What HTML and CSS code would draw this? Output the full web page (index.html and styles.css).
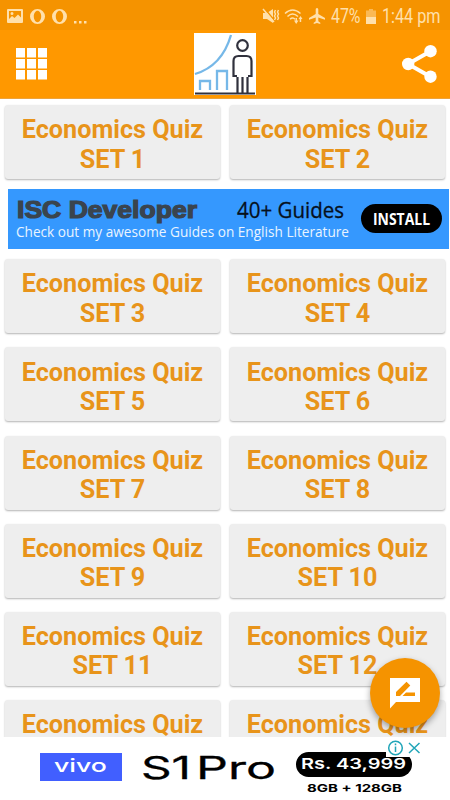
FILE: index.html
```html
<!DOCTYPE html>
<html lang="en">
<head>
    <meta charset="UTF-8">
    <meta name="viewport" content="width=device-width, initial-scale=1.0">
    <title>Economics Quiz</title>
    <link rel="stylesheet" href="styles.css">
</head>
<body>
    <div class="status-bar">
        <div class="status-left">
            <svg class="icon-picture" width="16" height="14" viewBox="0 0 16 14">
                <path fill-rule="evenodd" d="M1 0h14a1 1 0 0 1 1 1v12a1 1 0 0 1-1 1H1a1 1 0 0 1-1-1V1a1 1 0 0 1 1-1zM2 2v8l3-3 2.500 2L11 5.500l3 3V2zM5 3a1.500 1.500 0 1 1 0 3 1.500 1.500 0 0 1 0-3z"/>
            </svg>
            <svg class="icon-opera" width="15" height="15" viewBox="0 0 15 15">
                <path fill-rule="evenodd" d="M7.500 0a7.500 7.500 0 1 1 0 15 7.500 7.500 0 0 1 0-15zM7.500 1.800c-2 0-3.700 2.700-3.700 5.700s1.700 5.700 3.700 5.700 3.700-2.700 3.700-5.700-1.700-5.700-3.700-5.700z"/>
            </svg>
            <svg class="icon-opera" width="15" height="15" viewBox="0 0 15 15">
                <path fill-rule="evenodd" d="M7.500 0a7.500 7.500 0 1 1 0 15 7.500 7.500 0 0 1 0-15zM7.500 1.800c-2 0-3.700 2.700-3.700 5.700s1.700 5.700 3.700 5.700 3.700-2.700 3.700-5.700-1.700-5.700-3.700-5.700z"/>
            </svg>
            <svg width="13" height="15" viewBox="0 0 13 15">
                <path d="M0 12h2.500v2.500H0zM5 12h2.500v2.500H5zM10 12h2.500v2.500H10z"/>
            </svg>
        </div>
        <div class="status-right">
            <svg width="17" height="16" viewBox="0 0 17 16">
                <path d="M1 5h4l6-4v14l-6-4H1z"/>
                <path class="cut" d="M2 0l11 13"/>
                <path class="line" d="M1 1l11 13M13.500 2l-1 2 1 2-1 2 1 2-1 2M16.500 2l-1 2 1 2-1 2 1 2-1 2"/>
            </svg>
            <svg width="20" height="16" viewBox="0 0 20 16">
                <path class="line" d="M1 5.500q7.500-7 15.500 0M3.500 8.500q5-5 10.500 0M6 11.200q3-2.500 5 0"/>
                <path d="M10 12.500h1.500V10H13v2.500h1.500L12.200 16zM14.500 11l2-3 2 3h-1.300v3h-1.500v-3z"/>
            </svg>
            <svg width="16" height="16" viewBox="0 0 16 16">
                <path d="M8 0c.9 0 1.300.8 1.300 1.800V6L16 10v1.700L9.300 9.600v3.600l2 1.500V16L8 15l-3.300 1v-1.300l2-1.500V9.600L0 11.700V10l6.700-4V1.800C6.700.8 7.100 0 8 0z"/>
            </svg>
            <svg class="status-text" width="31" height="24" viewBox="0 0 31 24">
                <text x="1" y="18.500" textLength="29.500" lengthAdjust="spacingAndGlyphs">47%</text>
            </svg>
            <svg class="icon-battery" width="10" height="15" viewBox="0 0 10 15">
                <path opacity=".5" d="M3 0h4v1.500h3V8H0V1.500h3z"/>
                <path d="M0 8h10v7H0z"/>
            </svg>
            <svg class="status-text" width="60" height="24" viewBox="0 0 60 24">
                <text x="1" y="18.500" textLength="58.500" lengthAdjust="spacingAndGlyphs">1:44 pm</text>
            </svg>
        </div>
    </div>

    <div class="header">
        <svg class="menu" width="31" height="32" viewBox="0 0 31 32">
            <path d="M0 0h9v9.500H0zM11 0h9v9.500h-9zM22 0h9v9.500h-9zM0 11h9v9.500H0zM11 11h9v9.500h-9zM22 11h9v9.500h-9zM0 22h9v9.500H0zM11 22h9v9.500h-9zM22 22h9v9.500h-9z"/>
        </svg>
        <svg class="logo" width="62" height="62" viewBox="0 0 62 62">
            <g class="chart">
                <path d="M1 41Q28 33 37 2"/>
                <path d="M6 57V48h10v9M23 57V38h10v19"/>
            </g>
            <g class="person">
                <circle cx="48.500" cy="12.500" r="5.300"/>
                <path d="M43 43h-3.500V28q0-5 5-5h8q5 0 5 5v15H54M43.500 44v16M48.500 44v16M53.500 44v16"/>
                <path d="M1 60.500h60"/>
            </g>
        </svg>
        <svg class="share" width="35" height="38" viewBox="0 0 35 38">
            <path d="M28.500 6.200L6 19l22.500 12.800"/>
            <circle cx="28.500" cy="6.200" r="6.200"/>
            <circle cx="6.200" cy="19" r="6.200"/>
            <circle cx="28.500" cy="31.700" r="6.200"/>
        </svg>
    </div>

    <div class="content">
        <div class="row">
            <div class="card">Economics Quiz<br>SET 1</div>
            <div class="card">Economics Quiz<br>SET 2</div>
        </div>

        <div class="banner">
            <svg class="banner-text" width="345" height="60" viewBox="0 0 345 60">
                <text class="dev" x="9" y="28.500" textLength="180" lengthAdjust="spacingAndGlyphs">ISC Developer</text>
                <text class="guides" x="229" y="28.500" textLength="107" lengthAdjust="spacingAndGlyphs">40+ Guides</text>
                <text class="tagline" x="8" y="48" textLength="333" lengthAdjust="spacingAndGlyphs">Check out my awesome Guides on English Literature</text>
            </svg>
            <div class="install">
                <svg width="58" height="24" viewBox="0 0 58 24">
                    <text x="0" y="18" textLength="57" lengthAdjust="spacingAndGlyphs">INSTALL</text>
                </svg>
            </div>
        </div>

        <div class="row">
            <div class="card">Economics Quiz<br>SET 3</div>
            <div class="card">Economics Quiz<br>SET 4</div>
        </div>
        <div class="row">
            <div class="card">Economics Quiz<br>SET 5</div>
            <div class="card">Economics Quiz<br>SET 6</div>
        </div>
        <div class="row">
            <div class="card">Economics Quiz<br>SET 7</div>
            <div class="card">Economics Quiz<br>SET 8</div>
        </div>
        <div class="row">
            <div class="card">Economics Quiz<br>SET 9</div>
            <div class="card">Economics Quiz<br>SET 10</div>
        </div>
        <div class="row">
            <div class="card">Economics Quiz<br>SET 11</div>
            <div class="card">Economics Quiz<br>SET 12</div>
        </div>
        <div class="row">
            <div class="card">Economics Quiz</div>
            <div class="card">Economics Quiz</div>
        </div>
    </div>

    <div class="ad">
        <div class="vivo">
            <svg width="54" height="24" viewBox="0 0 54 24">
                <text x="0" y="17" textLength="53" lengthAdjust="spacingAndGlyphs">vivo</text>
            </svg>
        </div>
        <svg class="model" width="134" height="40" viewBox="0 0 134 40">
            <text x="-1" y="30" textLength="50" lengthAdjust="spacingAndGlyphs">S1</text>
            <text x="54" y="30" textLength="80" lengthAdjust="spacingAndGlyphs">Pro</text>
        </svg>
        <div class="offer">
            <div class="price">
                <svg width="108" height="24" viewBox="0 0 108 24">
                    <text x="1" y="17" textLength="105" lengthAdjust="spacingAndGlyphs">Rs. 43,999</text>
                </svg>
            </div>
            <svg class="memory" width="97" height="16" viewBox="0 0 97 16">
                <text x="1" y="12.500" textLength="95" lengthAdjust="spacingAndGlyphs">8GB + 128GB</text>
            </svg>
        </div>
        <div class="ad-choices">
            <svg width="36" height="18" viewBox="0 0 36 18">
                <circle cx="9.500" cy="9" r="6.800"/>
                <path d="M9.500 7.500v5.500M9.500 4.500v1.700M23 4l10.500 10M33.500 4L23 14"/>
            </svg>
        </div>
    </div>

    <div class="review-btn">
        <svg width="30" height="31" viewBox="0 0 30 31">
            <path class="bubble" d="M0 0h30v24H6l-6 6.500z"/>
            <path class="pencil" d="M6 18v-4l10.500-10.300 3.800 3.800L10 18zM12.500 18l3.500-3.500h9V18z"/>
        </svg>
    </div>
</body>
</html>
```
FILE: styles.css
```css
* {
    padding: 0;
    margin: 0;
    box-sizing: border-box;
}

body {
    width: 450px;
    height: 800px;
    overflow: hidden;
    position: relative;
    display: flex;
    flex-direction: column;
    background-color: white;
    font-family: Roboto, sans-serif;
}

svg {
    display: block;
    flex-shrink: 0;
    overflow: visible;
}

/* status bar */
.status-bar {
    height: 30px;
    display: flex;
    justify-content: space-between;
    align-items: center;
    padding: 2px 9px 0 7px;
    background-color: #f59300;
    fill: #ffe0ab;
}

.status-left {
    display: flex;
    align-items: center;
    gap: 7px;
}

.status-right {
    display: flex;
    align-items: center;
    gap: 5px;
}

.status-right .line {
    fill: none;
    stroke: #ffe0ab;
    stroke-width: 1.5;
}

.status-right .cut {
    stroke: #f59300;
    stroke-width: 1.5;
}

.status-text {
    font-size: 19.5px;
}

/* header */
.header {
    height: 68.5px;
    flex-shrink: 0;
    display: flex;
    justify-content: space-between;
    align-items: center;
    padding: 0 13px 0 16px;
    background-color: #ff9800;
    border-bottom: 1px solid #eda33b;
}

.menu {
    fill: white;
}

.logo {
    background-color: white;
    fill: none;
}

.chart {
    stroke: #76b8e8;
    stroke-width: 2.3;
}

.person {
    stroke: #30313d;
    stroke-width: 2.2;
}

.share {
    fill: white;
}

.share path {
    fill: none;
    stroke: white;
    stroke-width: 4;
}

/* quiz list */
.content {
    height: 638.5px;
    flex-shrink: 0;
    overflow: hidden;
    padding-top: 6.7px;
}

.row {
    display: flex;
    gap: 10px;
    padding: 0 5px;
    margin-bottom: 14.2px;
}

.card {
    width: 215px;
    height: 74px;
    padding-top: 10.2px;
    border-radius: 3px;
    background-color: #eee;
    box-shadow: 0 1px 2px rgba(0, 0, 0, 0.3);
    color: #e8941a;
    text-align: center;
    font-size: 25.2px;
    font-weight: bold;
    line-height: 29.3px;
    white-space: nowrap;
}

.banner {
    width: 441px;
    height: 60px;
    margin: -4.7px 0 10.5px 8px;
    display: flex;
    align-items: center;
    background-color: #3598fe;
}

.dev {
    font-family: "Liberation Sans", sans-serif;
    font-size: 23px;
    font-weight: bold;
    fill: #3a444e;
    stroke: #3a444e;
    stroke-width: 1.2;
}

.guides {
    font-family: "Open Sans", sans-serif;
    font-size: 21px;
    fill: #06101c;
    stroke: #06101c;
    stroke-width: 0.3;
}

.tagline {
    font-family: "Open Sans", sans-serif;
    font-size: 14px;
    fill: #e9f4ff;
}

.install {
    width: 81px;
    height: 29px;
    margin-left: 8px;
    border-radius: 15px;
    background-color: black;
    display: flex;
    align-items: center;
    justify-content: center;
    fill: white;
    font-family: "Open Sans", sans-serif;
    font-size: 16.5px;
    font-weight: bold;
}

/* bottom ad */
.ad {
    flex: 1;
    position: relative;
    display: flex;
    align-items: flex-start;
    padding-left: 40px;
    background-color: white;
    font-family: Inter, sans-serif;
}

.vivo {
    width: 82px;
    height: 28px;
    margin-top: 15.5px;
    display: flex;
    align-items: center;
    justify-content: center;
    background-color: #415fff;
    fill: white;
    font-size: 18px;
    font-weight: 500;
}

.model {
    margin: 11.5px 0 0 20px;
    font-size: 31px;
    font-weight: 400;
    fill: black;
    stroke: black;
    stroke-width: 0.3;
}

.offer {
    display: flex;
    flex-direction: column;
    align-items: center;
    margin: 14.5px 0 0 20px;
}

.price {
    width: 116px;
    height: 25px;
    border-radius: 13px;
    background-color: black;
    display: flex;
    align-items: center;
    justify-content: center;
    fill: white;
    font-size: 15px;
    font-weight: 600;
}

.memory {
    margin-top: 2px;
    font-size: 11px;
    font-weight: bold;
    fill: black;
}

.ad-choices {
    position: absolute;
    top: 1.5px;
    left: 386px;
    background-color: white;
}

.ad-choices svg {
    fill: none;
    stroke: #20a5b8;
    stroke-width: 1.5;
}

/* floating review button */
.review-btn {
    position: absolute;
    left: 370px;
    top: 658px;
    width: 70px;
    height: 70px;
    border-radius: 50%;
    background-color: #f59300;
    box-shadow: 0 3px 6px rgba(0, 0, 0, 0.35);
    display: flex;
    align-items: center;
    justify-content: center;
}

.bubble {
    fill: white;
}

.pencil {
    fill: #f59300;
}
```
